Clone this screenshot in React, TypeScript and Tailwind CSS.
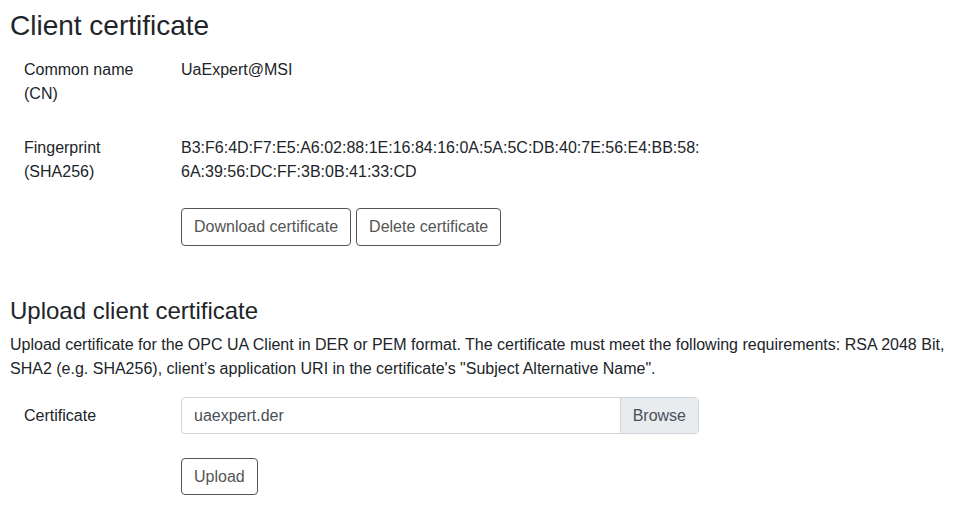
export default function App() {
  return (
    <div className="min-h-screen bg-white px-[10px] text-[16px] leading-6 text-[#212529] font-['Liberation_Sans',Arial,sans-serif]">
      <h3 className="pt-[9px] text-[28px] leading-[1.2] font-normal">Client certificate</h3>

      <div className="mt-[15px] flex">
        <div className="w-[130px] ml-[14px] mr-[27px]">Common name (CN)</div>
        <div>UaExpert@MSI</div>
      </div>

      <div className="mt-[30px] flex">
        <div className="w-[130px] ml-[14px] mr-[27px]">Fingerprint (SHA256)</div>
        <div>
          <div>B3:F6:4D:F7:E5:A6:02:88:1E:16:84:16:0A:5A:5C:DB:40:7E:56:E4:BB:58:</div>
          <div>6A:39:56:DC:FF:3B:0B:41:33:CD</div>
        </div>
      </div>

      <div className="mt-[24px] ml-[171px] flex gap-[5px]">
        <button className="h-[38px] px-3 border border-[#555] rounded text-[#555] bg-white">
          Download certificate
        </button>
        <button className="h-[38px] px-3 border border-[#555] rounded text-[#555] bg-white">
          Delete certificate
        </button>
      </div>

      <h4 className="mt-[51px] text-[24px] leading-[1.2] font-normal">Upload client certificate</h4>
      <p className="mt-[8px]">
        Upload certificate for the OPC UA Client in DER or PEM format. The certificate must meet the following
        requirements: RSA 2048 Bit, SHA2 (e.g. SHA256), client’s application URI in the certificate's "Subject
        Alternative Name".
      </p>

      <div className="mt-[16px] flex items-center">
        <div className="w-[130px] ml-[14px] mr-[27px]">Certificate</div>
        <div className="flex w-[518px] h-[37px] border border-[#ced4da] rounded">
          <div className="flex-1 flex items-center px-3 text-[#495057]">uaexpert.der</div>
          <div className="flex items-center px-3 bg-[#e9ecef] border-l border-[#ced4da] text-[#495057]">Browse</div>
        </div>
      </div>

      <div className="mt-[24px] ml-[171px]">
        <button className="h-[37px] px-3 border border-[#555] rounded text-[#555] bg-white">Upload</button>
      </div>
    </div>
  );
}
